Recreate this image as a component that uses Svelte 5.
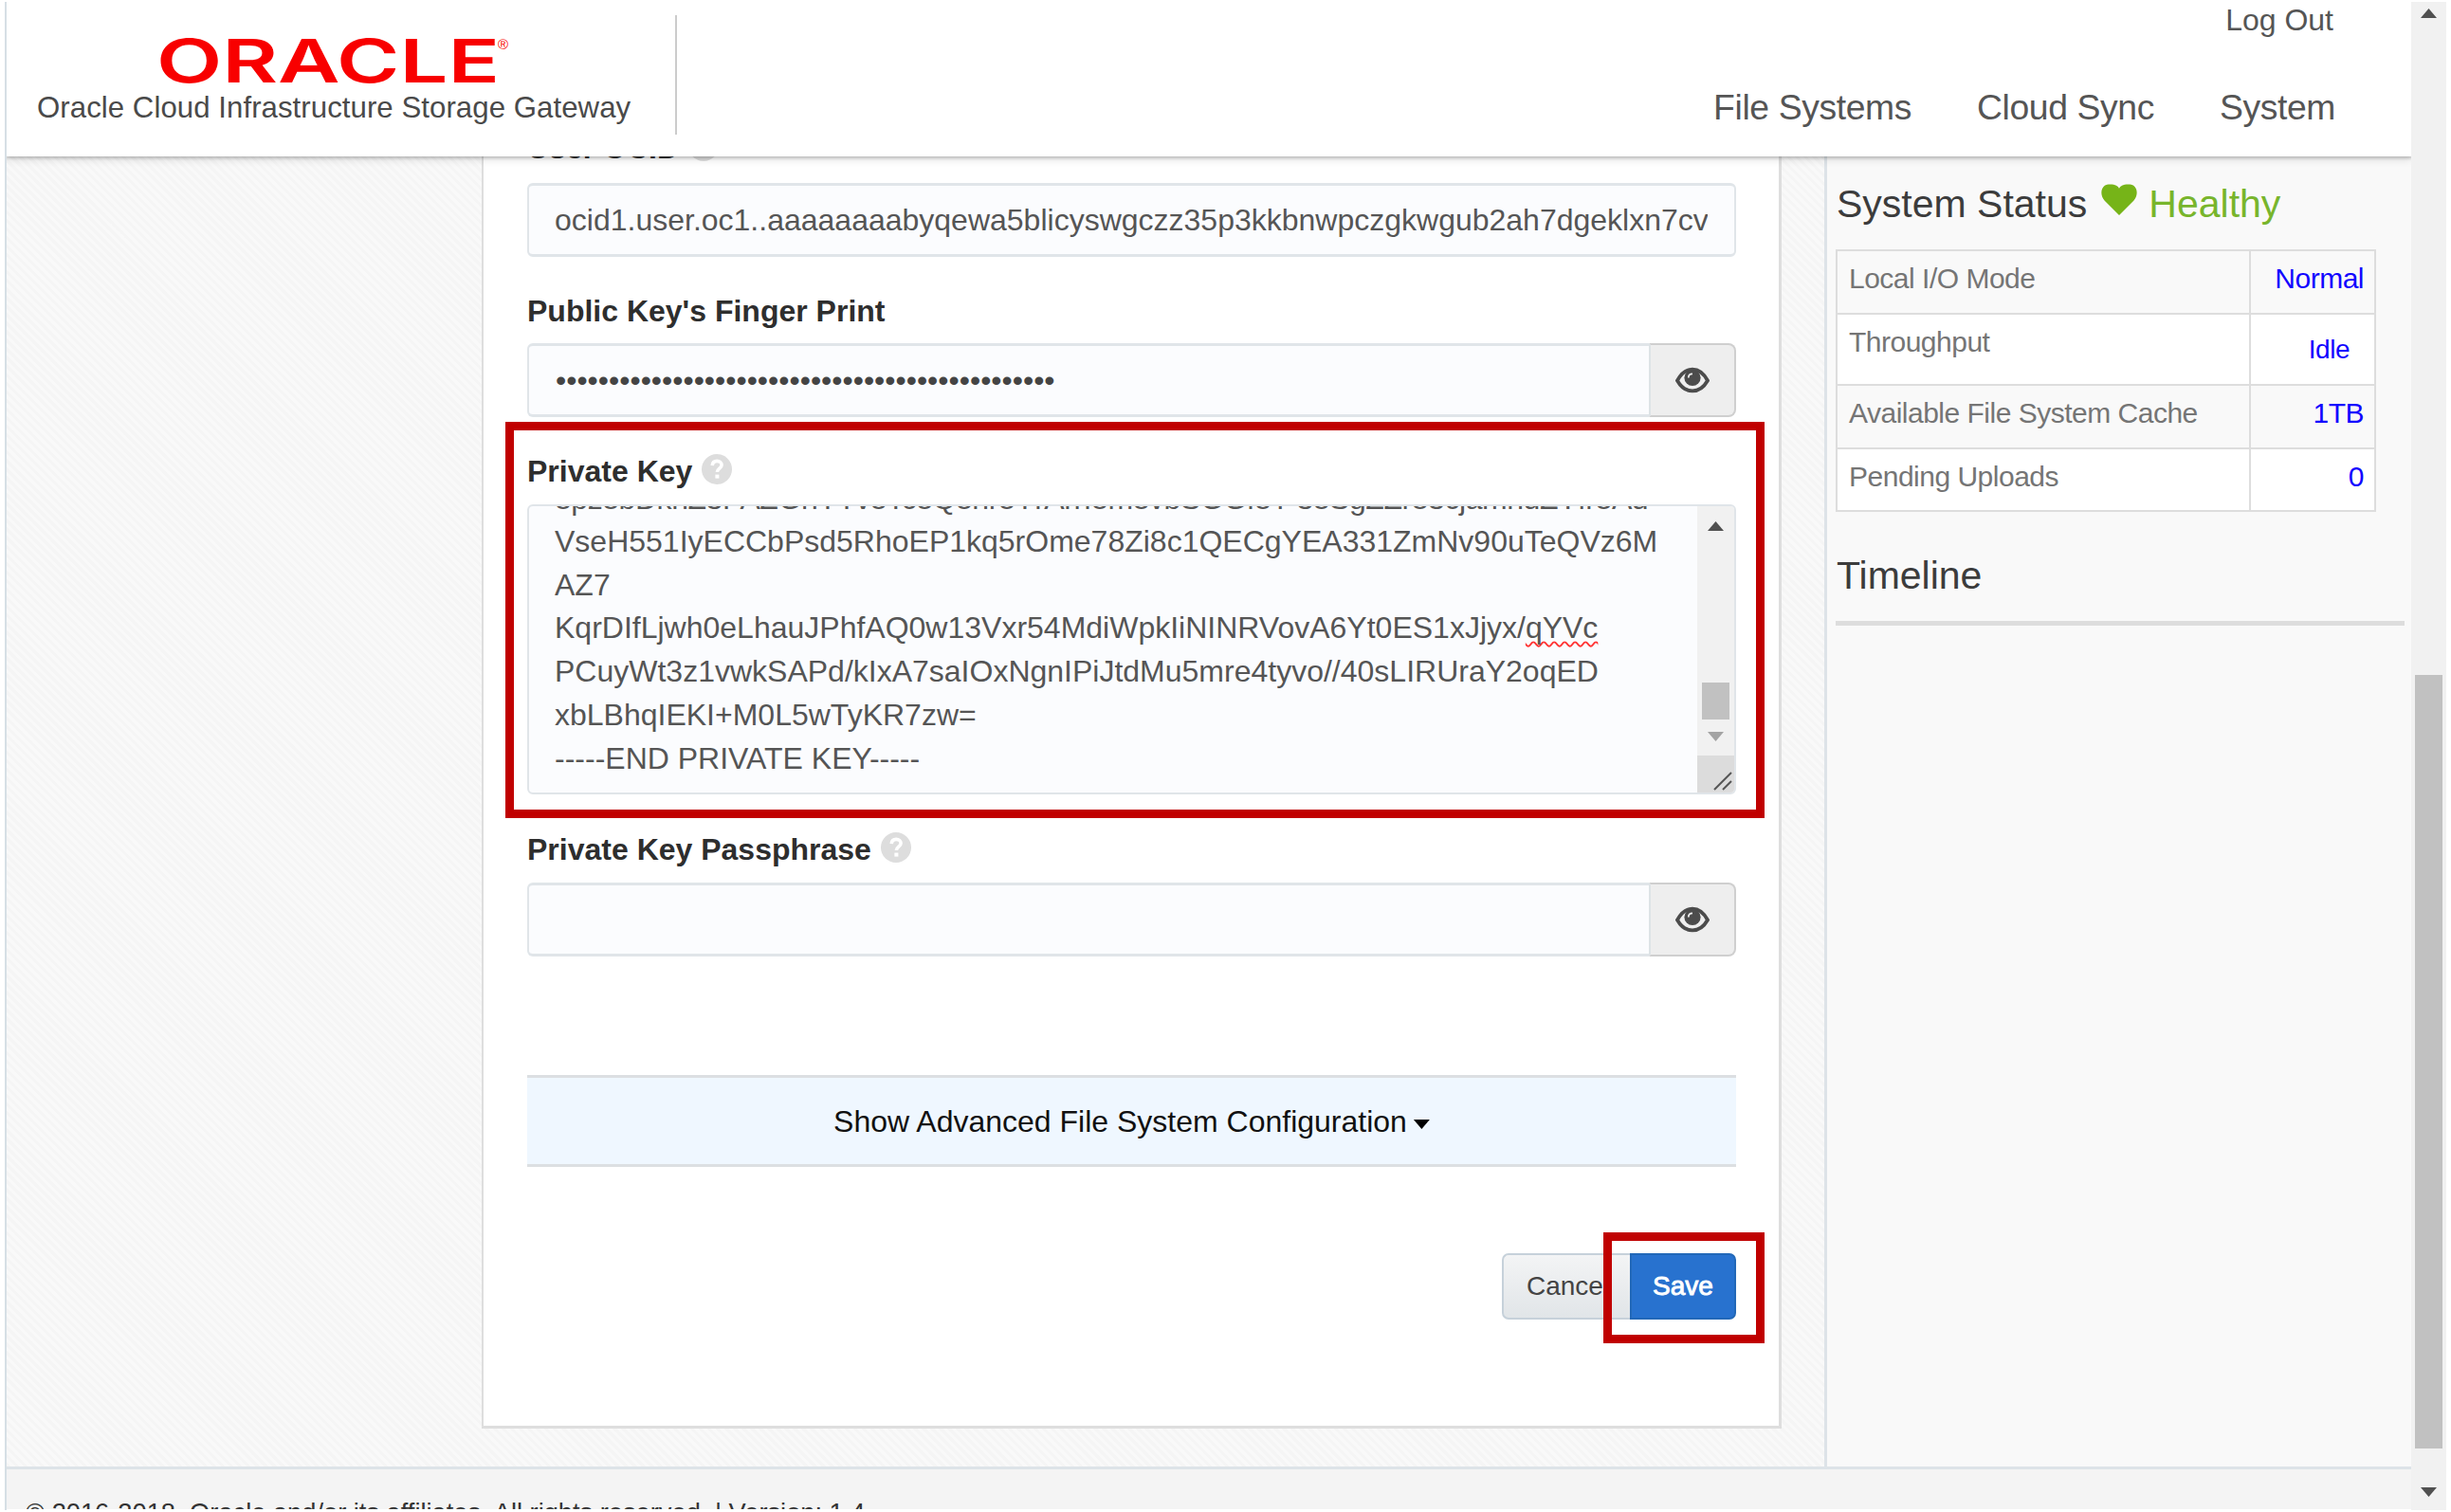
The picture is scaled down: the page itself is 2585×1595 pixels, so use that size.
<script lang="ts">
  const navItems = ['File Systems', 'Cloud Sync', 'System'];

  const statusRows = [
    { label: 'Local I/O Mode', value: 'Normal' },
    { label: 'Throughput', value: 'Idle', small: true },
    { label: 'Available File System Cache', value: '1TB' },
    { label: 'Pending Uploads', value: '0' }
  ];

  const userOcid = 'ocid1.user.oc1..aaaaaaaabyqewa5blicyswgczz35p3kkbnwpczgkwgub2ah7dgeklxn7cvq';
  const fingerprint = '•'.repeat(47);
</script>

{#snippet help()}
  <svg class="help" viewBox="0 0 32 32" aria-hidden="true">
    <circle cx="16" cy="16" r="16" fill="#dddddd" />
    <path d="M11.2 12.2c.3-3.2 2.300-4.800 5-4.800 2.900 0 4.900 1.700 4.900 4.200 0 3.600-4.600 3.600-4.700 7.400" fill="none" stroke="#fff" stroke-width="3.600" />
    <rect x="14.400" y="21.600" width="4" height="4" fill="#fff" />
  </svg>
{/snippet}

{#snippet eye()}
  <button class="reveal" aria-label="Show value">
    <svg class="eye" viewBox="0 0 36 28" aria-hidden="true">
      <path d="M2 14.500C6 7 11.500 2.600 18 2.600S30 7 34 14.500C30 21.500 24.500 25.400 18 25.400S6 21.500 2 14.500Z" fill="none" stroke="#4c4c4c" stroke-width="3.800" />
      <circle cx="18" cy="11.500" r="8.600" fill="#4c4c4c" />
      <path d="M13.800 11.500c0-2.600 1.600-4.200 4.200-4.200" fill="none" stroke="#eee" stroke-width="1.800" />
    </svg>
  </button>
{/snippet}

<div class="page">
  <div class="view">
    <header>
      <div class="brand">
        <svg class="logo" viewBox="0 0 368 50" aria-label="Oracle">
          <text class="word" x="-4" y="48" textLength="362" lengthAdjust="spacingAndGlyphs">ORACLE</text>
          <text class="reg" x="356" y="13">®</text>
        </svg>
        <div class="product">Oracle Cloud Infrastructure Storage Gateway</div>
      </div>
      <div class="menus">
        <div class="logout">Log Out</div>
        <nav>
          {#each navItems as item}<span>{item}</span>{/each}
        </nav>
      </div>
    </header>

    <main>
      <section class="panel">
        <div class="label first">User OCID {@render help()}</div>
        <div class="input"><span class="clip">{userOcid}</span></div>

        <div class="label second">Public Key's Finger Print</div>
        <div class="group">
          <div class="input"><span class="clip dots">{fingerprint}</span></div>
          {@render eye()}
        </div>

        <div class="label third">Private Key {@render help()}</div>
        <div class="textarea">
          <div class="lines">
            <div>8pz8bDkhZ3PAZGhYTv8Tc8Q8hr8YrArrf8m8vbSGGf8T 38SgZZr83cjamhdZYfr8Ad</div>
            <div>VseH551IyECCbPsd5RhoEP1kq5rOme78Zi8c1QECgYEA331ZmNv90uTeQVz6M</div>
            <div>AZ7</div>
            <div>KqrDIfLjwh0eLhauJPhfAQ0w13Vxr54MdiWpkIiNINRVovA6Yt0ES1xJjyx/<span class="typo">qYVc</span></div>
            <div>PCuyWt3z1vwkSAPd/kIxA7saIOxNgnIPiJtdMu5mre4tyvo//40sLIRUraY2oqED</div>
            <div>xbLBhqIEKI+M0L5wTyKR7zw=</div>
            <div>-----END PRIVATE KEY-----</div>
          </div>
          <div class="minibar">
            <i class="arrow up"></i>
            <i class="minithumb"></i>
            <i class="arrow down pale"></i>
            <svg class="grip" viewBox="0 0 39 39" aria-hidden="true">
              <path d="M18 36 36 18M27 36 36 27" stroke="#555" stroke-width="2" fill="none" />
            </svg>
          </div>
        </div>

        <div class="label fourth">Private Key Passphrase {@render help()}</div>
        <div class="group">
          <div class="input"></div>
          {@render eye()}
        </div>

        <div class="advanced">Show Advanced File System Configuration<i class="arrow down caret"></i></div>

        <div class="actions">
          <button class="cancel">Cancel</button>
          <button class="save">Save</button>
        </div>
      </section>

      <aside>
        <h2>
          System Status
          <svg class="heart" viewBox="0 0 38 33" aria-hidden="true">
            <path d="M19 33 3.500 17.500C-1 12.500-.5 5 3.800 1.800 6 .2 13 .2 16 1.800 17.500 2.600 18.400 3.600 19 4.800 19.600 3.600 20.500 2.600 22 1.800 25 .2 32 .2 34.200 1.800 38.500 5 39 12.500 34.500 17.500Z" fill="#76b418" />
          </svg>
          <span class="healthy">Healthy</span>
        </h2>
        <div class="table">
          {#each statusRows as row}
            <div class="row" class:tall={row.small}>
              <div class="name">{row.label}</div>
              <div class="value" class:small={row.small}>{row.value}</div>
            </div>
          {/each}
        </div>
        <h2 class="timeline">Timeline</h2>
        <div class="rule"></div>
      </aside>
    </main>

    <footer>© 2016-2018, Oracle and/or its affiliates. All rights reserved. | Version: 1.4</footer>
  </div>

  <div class="scrollbar">
    <i class="arrow up"></i>
    <i class="thumb"></i>
    <i class="arrow down"></i>
  </div>

  <div class="mark key"></div>
  <div class="mark submit"></div>
</div>

<style>
  :global(body) { margin: 0; background: #fff; }
  .page, .page * { box-sizing: border-box; }
  .page {
    position: relative;
    width: 2585px;
    height: 1595px;
    padding: 2px 5px;
    overflow: hidden;
    display: flex;
    font: 32px 'Liberation Sans', Arial, sans-serif;
    color: #555;
    white-space: nowrap;
  }
  .view {
    width: 2538px;
    display: flex;
    flex-direction: column;
    border-left: 2px solid #d6dfe5;
    overflow: hidden;
  }

  header {
    position: relative;
    z-index: 1;
    height: 163px;
    flex: none;
    display: flex;
    justify-content: space-between;
    background: #fff;
    box-shadow: 0 1px 3px 1px rgba(0, 0, 0, 0.2), 0 4px 8px rgba(0, 0, 0, 0.1);
  }
  .brand {
    width: 707px;
    height: 126px;
    margin-top: 14px;
    border-right: 2px solid #ccc;
    padding: 23px 0 0 32px;
  }
  .logo { display: block; width: 368px; height: 50px; margin-left: 130px; overflow: visible; }
  .word { font: 600 63px Inter, sans-serif; fill: #f80000; }
  .reg { font: 15px 'Liberation Sans', sans-serif; fill: #f80000; }
  .product { margin-top: 5px; line-height: 40px; font-size: 31.200px; letter-spacing: 0.050px; color: #4a4a4a; }
  .menus { display: flex; flex-direction: column; align-items: flex-end; padding-right: 80px; }
  .logout { margin-top: -1px; margin-right: 2px; line-height: 40px; }
  nav { display: flex; gap: 69px; margin-top: 50px; font-size: 37.300px; line-height: 44px; letter-spacing: -0.380px; }

  main {
    flex: none;
    height: 1382px;
    display: flex;
    justify-content: space-between;
    align-items: flex-start;
    overflow: hidden;
    background: repeating-linear-gradient(45deg, #f5f5f5 0 3.200px, #f9f9f9 3.200px 6.400px);
  }
  .panel {
    width: 1371px;
    height: 1342px;
    margin-left: 501px;
    padding: 0 45px 0 46px;
    border: 2px solid #dedede;
    border-width: 0 3px 3px 2px;
    background: #fff;
  }
  .label {
    display: flex;
    align-items: center;
    gap: 10px;
    height: 46px;
    margin-bottom: 11px;
    font-weight: bold;
    color: #2e2e2e;
  }
  .first { margin-top: -32px; margin-bottom: 14px; }
  .second { margin-top: 34px; }
  .third { margin-top: 34px; margin-bottom: 12px; }
  .fourth { margin-top: 35px; margin-bottom: 12px; }
  .help { width: 32px; height: 32px; margin-bottom: 5px; }
  .input {
    flex: 1;
    height: 78px;
    padding: 0 28px 0 27px;
    border: 2px solid #e0e5e9;
    border-width: 3px 2px;
    border-radius: 6px;
    background: #fbfcfe;
  }
  .clip { display: block; overflow: hidden; line-height: 72px; }
  .dots { padding-left: 1px; color: #444; }
  .group { display: flex; }
  .group .input { border-right-width: 0; border-radius: 6px 0 0 6px; }
  .reveal {
    width: 92px;
    height: 78px;
    padding: 0;
    display: grid;
    place-items: center;
    border: 2px solid #cfcfcf;
    border-left-color: #dde3e6;
    border-radius: 0 8px 8px 0;
    background: #eee;
  }
  .eye { width: 36px; height: 28px; }

  .textarea {
    height: 306px;
    display: flex;
    justify-content: space-between;
    border: 2px solid #e0e5e9;
    border-radius: 6px;
    background: #fbfcfe;
    overflow: hidden;
  }
  .lines { height: 302px; margin-left: 27px; overflow: hidden; font-size: 32px; line-height: 45.800px; }
  .lines div:first-child { margin-top: -30px; margin-bottom: -1px; letter-spacing: -0.450px; }
  .typo { text-decoration: underline wavy #f33 2px; text-decoration-skip-ink: none; text-underline-offset: 3px; }
  .minibar { width: 39px; display: flex; flex-direction: column; align-items: center; background: #f1f1f1; }
  .minibar .up { margin-top: 16px; }
  .minithumb { width: 29px; height: 39px; margin: 160px 0 13px; background: #c1c1c1; }
  .grip { width: 39px; height: 39px; margin-top: auto; background: #dcdcdc; }

  .arrow { flex: none; width: 17px; height: 10px; background: #505050; }
  .up { clip-path: polygon(50% 0, 100% 100%, 0 100%); }
  .down { clip-path: polygon(0 0, 100% 0, 50% 100%); }
  .pale { background: #a3a3a3; }
  .caret { background: #000; margin: 6px 0 0 7px; }

  .advanced {
    display: flex;
    align-items: center;
    justify-content: center;
    height: 97px;
    margin-top: 125px;
    padding-top: 1px;
    border: solid #dcdfe2;
    border-width: 3px 0;
    background: #eff7ff;
    color: #111;
  }
  .actions { display: flex; justify-content: flex-end; margin-top: 91px; }
  .actions button { height: 70px; padding: 0 0 1px; font: 28px 'Liberation Sans', Arial, sans-serif; }
  .actions .cancel {
    width: 135px;
    padding-left: 2px;
    border: 2px solid #c6d1da;
    border-right: 0;
    border-radius: 7px 0 0 7px;
    background: linear-gradient(#f3f4f5, #e1e5e8);
    color: #444;
  }
  .save {
    width: 112px;
    border: 2px solid #2268b8;
    border-radius: 0 7px 7px 0;
    background: #2872cf;
    color: #fff;
    -webkit-text-stroke: 0.9px #fff;
  }

  aside { width: 619px; height: 1382px; padding: 25px 7px 0 9px; border-left: 3px solid #dde3e8; background: #f9f9f9; }
  h2 { display: flex; margin: 0; padding-left: 1px; font-size: 41px; font-weight: normal; line-height: 50px; color: #3c3c3c; }
  .heart { width: 38px; height: 33px; margin: -10px 12px 0 15px; align-self: center; }
  .healthy { color: #78b52c; }
  .table { width: 570px; margin-top: 23px; border: solid #ddd; border-width: 0 2px 2px; font-size: 30px; letter-spacing: -0.500px; color: #757575; }
  .row { display: grid; grid-template-columns: 434px 1fr; height: 66.500px; border-top: 2px solid #ddd; background: #f9f9f9; line-height: 58px; }
  .row:nth-child(even) { background: #fff; }
  .tall { height: 75.500px; }
  .name { padding-left: 12px; }
  .value { padding-right: 11px; border-left: 2px solid #ddd; text-align: right; color: #1206ff; }
  .small { padding: 8px 26px 0 0; font-size: 28px; }
  .timeline { margin-top: 42px; }
  .rule { height: 5px; margin-top: 23px; background: #ddd; }

  footer {
    flex: none;
    height: 45px;
    padding: 30px 0 0 20px;
    overflow: hidden;
    border-top: 3px solid #dde3e8;
    background: #f4f4f4;
    font-size: 27.250px;
    line-height: 32px;
    color: #333;
  }

  .scrollbar { width: 37px; display: flex; flex-direction: column; align-items: center; background: #f1f1f1; }
  .scrollbar .up { margin-top: 7px; }
  .thumb { width: 29px; height: 816px; margin: 693px 0 41px; background: #c1c1c1; }

  .mark { position: absolute; border: 9px solid #c00000; }
  .key { left: 533px; top: 445px; width: 1328px; height: 418px; }
  .submit { left: 1691px; top: 1300px; width: 170px; height: 117px; }
</style>
